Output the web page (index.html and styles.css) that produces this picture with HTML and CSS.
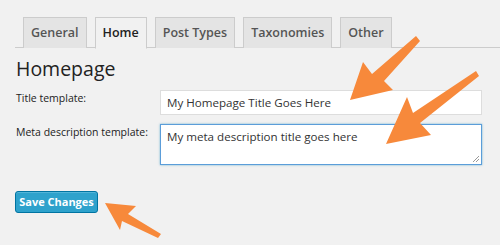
FILE: index.html
```html
<!DOCTYPE html>
<html>
<head>
<meta charset="utf-8">
<link rel="stylesheet" href="styles.css">
</head>
<body>
<div class="page">
  <nav class="tabs">
    <span class="tab">General</span>
    <span class="tab active">Home</span>
    <span class="tab">Post Types</span>
    <span class="tab">Taxonomies</span>
    <span class="tab">Other</span>
  </nav>
  <h2 class="title">Homepage</h2>
  <div class="form">
    <label class="label">Title template:</label>
    <div class="input">My Homepage Title Goes Here</div>
    <label class="label">Meta description template:</label>
    <div class="textarea">My meta description title goes here
      <svg class="grip" width="8" height="8" viewBox="0 0 8 8"><path d="M1 7 L7 1 M4 7 L7 4" stroke="#999" stroke-width="1"/></svg>
    </div>
  </div>
  <div class="actions"><button class="btn">Save Changes</button></div>
  <svg class="arrows" width="500" height="245" viewBox="0 0 500 245">
    <path fill="#f7893b" d="M416 36 L420 41 L384 81 L393 90 L350 100 L363 62 L372 74 Z"/>
    <path fill="#f7893b" d="M476 71 L479 76 L420 123 L431 135 L386 144 L407 97 L413 113 Z"/>
    <path fill="#f7893b" d="M105 203 L136 206 L128 214 L161 234 L158 238 L122 221 L120 230 Z"/>
  </svg>
</div>
</body>
</html>
```
FILE: styles.css
```css
html, body {
  margin: 0;
  padding: 0;
  background: #f1f1f1;
}
.page {
  position: relative;
  width: 500px;
  height: 245px;
  overflow: hidden;
  font-family: "Open Sans", "Noto Sans", sans-serif;
  color: #222;
}
.tabs {
  display: flex;
  gap: 8px;
  margin: 0 0 0 15px;
  padding: 17px 0 0 8px;
  border-bottom: 1px solid #ccc;
  height: 30px;
}
.tab {
  box-sizing: border-box;
  height: 31px;
  border: 1px solid #ccc;
  border-bottom: none;
  background: #e4e4e4;
  color: #555;
  font-size: 12.5px;
  font-weight: 600;
  line-height: 29px;
  padding: 0 7px;
}
.tab.active {
  background: #f1f1f1;
  color: #222;
  border-bottom: 1px solid #f1f1f1;
  height: 32px;
}
.title {
  margin: 6px 0 0 16px;
  font-size: 19.5px;
  font-weight: 400;
  line-height: 29px;
  color: #222;
}
.form {
  display: grid;
  grid-template-columns: 144px 322px;
  row-gap: 9px;
  margin: 7px 0 0 16px;
  align-items: start;
}
.label {
  font-size: 10.5px;
  line-height: 16px;
  color: #222;
}
.input, .textarea {
  box-sizing: border-box;
  background: #fff;
  border: 1px solid #ddd;
  font-size: 11.6px;
  color: #333;
  padding: 0 6px;
}
.input {
  height: 25px;
  line-height: 23px;
}
.textarea {
  position: relative;
  height: 41px;
  border-color: #5b9dd9;
  box-shadow: 0 0 2px rgba(30,140,190,.6);
  line-height: 18px;
  padding-top: 3px;
}
.grip {
  position: absolute;
  right: 1px;
  bottom: 1px;
}
.actions {
  margin: 24px 0 0 15px;
}
.btn {
  box-sizing: border-box;
  height: 22px;
  width: 83px;
  padding: 0;
  background: #2ea2cc;
  border: 1px solid #0074a2;
  border-radius: 3px;
  box-shadow: inset 0 1px 0 rgba(120,200,230,.5);
  color: #fff;
  font-family: "Open Sans", sans-serif;
  font-size: 11px;
  font-weight: 700;
  line-height: 20px;
}
.arrows {
  position: absolute;
  left: 0;
  top: 0;
  pointer-events: none;
}
```
